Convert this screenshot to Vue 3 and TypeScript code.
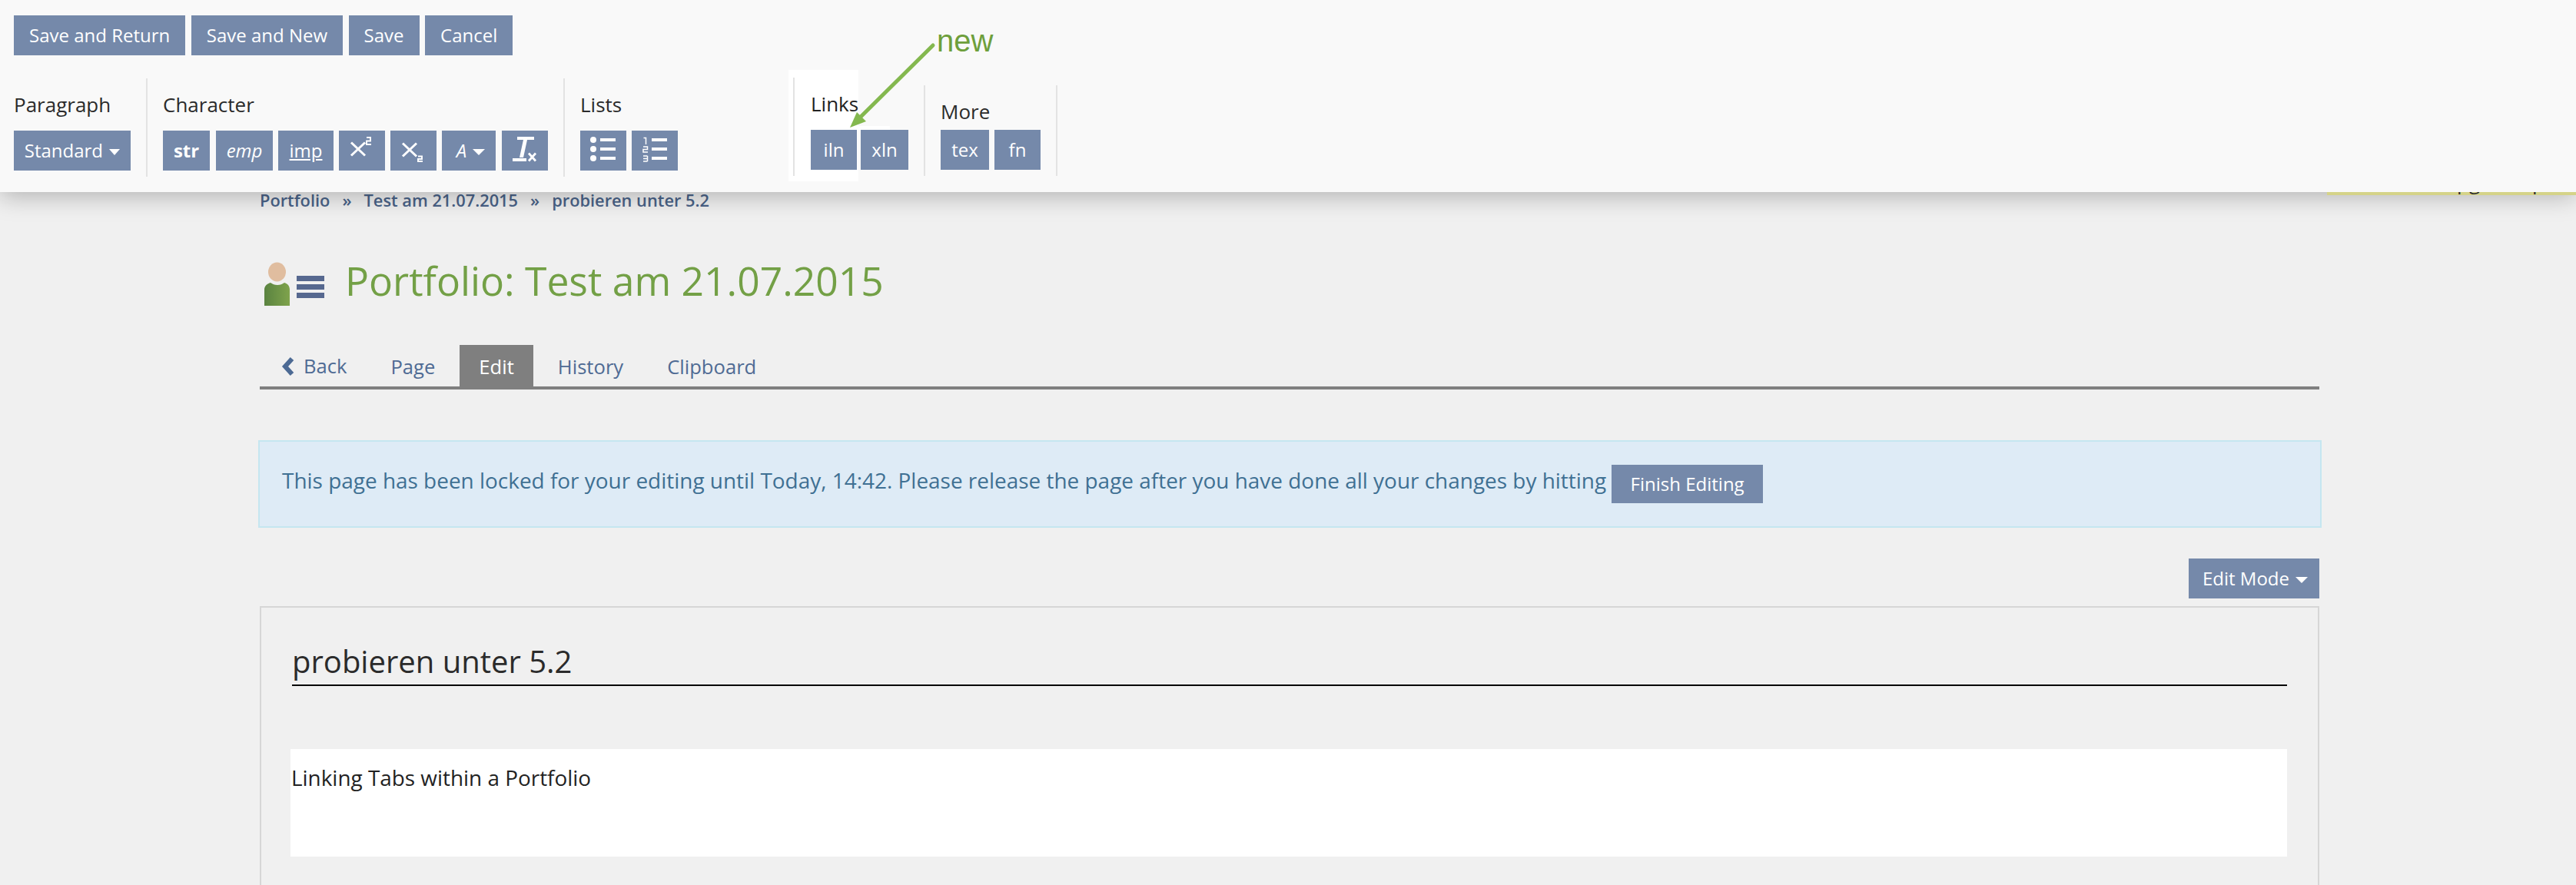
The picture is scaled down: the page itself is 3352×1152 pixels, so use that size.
<script setup lang="ts">
const topActions: string[] = ['Save and Return', 'Save and New', 'Save', 'Cancel']
const tabs: string[] = ['Page', 'Edit', 'History', 'Clipboard']
</script>

<template>
  <div class="page">
    <header class="toolbar">
      <i class="patch patch-a"></i>
      <i class="patch patch-b"></i>
      <div class="actions">
        <button v-for="a in topActions" :key="a" class="btn action">{{ a }}</button>
      </div>
      <div class="groups">
        <section class="group g-par">
          <h4>Paragraph</h4>
          <div class="row"><button class="btn std">Standard <i class="caret"></i></button></div>
        </section>
        <section class="group g-char">
          <h4>Character</h4>
          <div class="row">
            <button class="btn b-str"><strong>str</strong></button>
            <button class="btn b-emp"><em>emp</em></button>
            <button class="btn b-imp"><u>imp</u></button>
            <button class="btn b-ico">
              <svg width="60" height="52" viewBox="0 0 60 52"><path d="M16 15.500l18 17M34 15.500l-18 17" stroke="#fff" stroke-width="3" fill="none"/><path d="M36 9h5v4.500h-5V18h6" stroke="#fff" stroke-width="1.900" fill="none"/></svg>
            </button>
            <button class="btn b-ico">
              <svg width="60" height="52" viewBox="0 0 60 52"><path d="M16 16.500l18 17M34 16.500l-18 17" stroke="#fff" stroke-width="3" fill="none"/><path d="M36 33.500h5V37h-5v3h6" stroke="#fff" stroke-width="1.900" fill="none"/></svg>
            </button>
            <button class="btn b-a"><em>A</em><i class="caret wide"></i></button>
            <button class="btn b-ico b-tx">
              <svg width="60" height="52" viewBox="0 0 60 52" fill="#fff"><path d="M20 8h22v4h-9l-5 23h-5l5-23H20zM14 36h18v4H14z"/><path d="M35 29.500l9 10M44 29.500l-9 10" stroke="#fff" stroke-width="2.800" fill="none"/></svg>
            </button>
          </div>
        </section>
        <section class="group g-list">
          <h4>Lists</h4>
          <div class="row">
            <button class="btn b-ico">
              <svg width="60" height="52" viewBox="0 0 60 52" fill="#fff"><circle cx="17" cy="12" r="4"/><circle cx="17" cy="24" r="4"/><circle cx="17" cy="36" r="4"/><path d="M26 10h20v4H26zM26 22h20v4H26zM26 34h20v4H26z"/></svg>
            </button>
            <button class="btn b-ico">
              <svg width="60" height="52" viewBox="0 0 60 52"><path d="M26 10h20v4H26zM26 22h20v4H26zM26 34h20v4H26z" fill="#fff"/><path d="M15.500 9.500h3V18M15 21h5.500v3.500H15V28h6M15 33h5.500M15 36.500h5.500M15 40h5.500M20.500 33v7" stroke="#fff" stroke-width="1.500" fill="none"/></svg>
            </button>
          </div>
        </section>
        <section class="group g-links">
          <h4>Links</h4>
          <div class="row"><button class="btn b-iln">iln</button><button class="btn b-xln">xln</button></div>
        </section>
        <section class="group g-more">
          <h4>More</h4>
          <div class="row"><button class="btn b-tex">tex</button><button class="btn b-fn">fn</button></div>
        </section>
      </div>
      <span class="new">new</span>
      <svg class="arrow" width="130" height="130" viewBox="0 0 130 130">
        <path d="M114 9L18 104" stroke="#84b84f" stroke-width="5" stroke-linecap="round" fill="none"/>
        <path d="M6 116l9-20 12 12z" fill="#84b84f"/>
      </svg>
    </header>

    <div class="notice-strip"><span class="frag f1">pg</span><span class="frag f2">p</span></div>

    <main class="content">
      <nav class="crumbs"><a>Portfolio</a><span>»</span><a>Test am 21.07.2015</a><span>»</span><a>probieren unter 5.2</a></nav>
      <div class="title">
        <svg class="tico" width="78" height="58" viewBox="0 0 78 58">
          <defs><linearGradient id="bg" x1="0" x2="1" y1="0" y2="0"><stop offset="0" stop-color="#5a8340"/><stop offset="1" stop-color="#7fa34c"/></linearGradient></defs>
          <ellipse cx="16.500" cy="13" rx="11.500" ry="12.500" fill="#e0bd9f"/>
          <path d="M0 57V36c0-5 4-8 8-9 3 2 5 3 9 3s6-1 9-3c4 1 7 4 7 9v21z" fill="url(#bg)"/>
          <path d="M42 18h36v7H42zM42 29h36v7H42zM42 40h36v7H42z" fill="#56688f"/>
        </svg>
        <h1>Portfolio: Test am 21.07.2015</h1>
      </div>
      <div class="tabs">
        <a class="tab back"><svg width="18" height="24" viewBox="0 0 18 24"><path d="M14 2L5 12l9 10" stroke="#4c6a94" stroke-width="6" fill="none"/></svg>Back</a>
        <a v-for="t in tabs" :key="t" class="tab" :class="{ active: t === 'Edit' }">{{ t }}</a>
      </div>
      <div class="alert">
        <span>This page has been locked for your editing until Today, 14:42. Please release the page after you have done all your changes by hitting</span>
        <button class="btn finish">Finish Editing</button>
      </div>
      <div class="modebar"><button class="btn mode">Edit Mode<i class="caret wide"></i></button></div>
      <section class="panel">
        <h2>probieren unter 5.2</h2>
        <div class="para">Linking Tabs within a Portfolio</div>
      </section>
    </main>
  </div>
</template>

<style>
html, body { margin: 0; background: #f0f0f0; overflow: hidden; }
</style>

<style scoped>
.page { position: relative; width: 3352px; height: 1152px; overflow: hidden; background: #f0f0f0; font-family: "Open Sans", "Noto Sans", sans-serif; }
.toolbar { position: relative; z-index: 3; height: 250px; box-sizing: border-box; background: #f9f9f9; padding-top: 20px; box-shadow: 0 5px 30px rgba(0,0,0,.27); }
.patch { position: absolute; background: #fff; display: block; }
.patch-a { left: 1026px; top: 91px; width: 91px; height: 145px; }
.patch-b { left: 1117px; top: 164px; width: 41px; height: 5px; }
.actions { display: flex; gap: 7.5px; margin-left: 18px; }
.btn { border: 0; margin: 0; padding: 0; height: 52px; background: #7589aa; color: #fff; font: 24px/52px "Open Sans", sans-serif; display: inline-flex; align-items: center; justify-content: center; white-space: pre; }
.action { padding: 0 20px; }
.caret { display: inline-block; width: 0; height: 0; border-left: 7px solid transparent; border-right: 7px solid transparent; border-top: 8px solid #fff; margin-left: 2px; margin-top: 4px; }
.caret.wide { border-left-width: 8px; border-right-width: 8px; margin-left: 8px; }
.groups { position: relative; display: flex; align-items: flex-start; margin-top: 30px; }
.group { box-sizing: border-box; height: 128px; }
.group h4 { box-sizing: border-box; margin: 0; font: 400 26px/36px "Open Sans", sans-serif; color: #2b2b2b; padding-top: 16px; height: 68px; }
.row { display: flex; gap: 7px; }
.g-par { width: 192px; padding-left: 18px; border-right: 2px solid #e3e3e3; }
.g-char { width: 543px; padding-left: 20px; border-right: 2px solid #e3e3e3; }
.g-list { width: 297px; padding-left: 20px; }
.g-links { width: 170px; padding-left: 21px; margin-top: -1px; border-left: 2px solid #e3e3e3; }
.g-links h4 { color: #222; }
.g-links .row { gap: 5px; }
.g-more { width: 174px; height: 118px; padding-left: 20px; margin-top: 9px; border-left: 2px solid #e3e3e3; border-right: 2px solid #e3e3e3; }
.g-more h4 { height: 58px; }
.std { width: 152px; }
.b-str { width: 61px; }
.b-emp { width: 74px; margin-left: 1px; }
.b-imp { width: 72px; }
.b-ico { width: 60px; }
.b-tx { margin-left: 1px; }
.b-a { width: 70px; padding-left: 5px; box-sizing: border-box; }
.b-iln { width: 60px; }
.b-xln { width: 62px; }
.b-tex { width: 63px; }
.b-fn { width: 60px; }
.new { position: absolute; left: 1219px; top: 30px; font: 40px/46px "Liberation Sans", Arial, sans-serif; color: #6e9f3c; }
.arrow { position: absolute; left: 1100px; top: 50px; }

.notice-strip { position: absolute; z-index: 4; left: 3028px; top: 250px; width: 324px; height: 4px; background: #d5d388; overflow: hidden; }
.frag { position: absolute; top: -26px; font: 26px/26px "Open Sans", sans-serif; color: #2b2b2b; white-space: nowrap; }
.f1 { left: 169px; }
.f2 { left: 267px; }

.content { margin: 0 334px 0 338px; }
.crumbs { display: flex; gap: 16px; margin-top: -4px; font: 600 21.8px/30px "Open Sans", sans-serif; color: #4a6388; }
.title { display: flex; align-items: flex-start; margin-top: 65px; height: 58px; }
.tico { margin-left: 6px; flex: none; }
h1 { margin: -5px 0 0 27px; font: 400 51.6px/58px "Open Sans", sans-serif; color: #73a046; white-space: nowrap; }
.tabs { display: flex; gap: 7px; margin-top: 50px; padding-left: 28px; border-bottom: 4px solid #7f7f7f; }
.tab { box-sizing: border-box; height: 54px; padding: 2px 25px 0; font-size: 25.6px; line-height: 54px; color: #4f6b94; }
.tab.back { display: flex; align-items: center; gap: 11px; padding-left: 0; }
.tab.active { background: #7f7f7f; color: #fff; }
.alert { box-sizing: border-box; display: flex; align-items: flex-start; gap: 7px; height: 114px; margin: 66px -3px 0 -2px; padding: 30px 0 0 29px; border: 2px solid #c5e6f0; background: #deebf6; color: #3f7093; font-size: 27.94px; line-height: 40px; white-space: nowrap; }
.finish { width: 197px; height: 50px; }
.modebar { display: flex; justify-content: flex-end; margin-top: 40px; }
.mode { width: 170px; height: 52px; padding-left: 3px; box-sizing: border-box; }
.panel { box-sizing: border-box; height: 500px; margin-top: 10px; padding: 43px 40px 0 38px; border: 2px solid #d6d6d6; }
h2 { margin: 0 0 0 2px; padding-bottom: 3px; font: 400 40px/54px "Open Sans", sans-serif; color: #2b2b2b; border-bottom: 2px solid #000; }
.para { box-sizing: border-box; height: 140px; margin-top: 82px; padding: 17px 0 0 1px; background: #fff; color: #222; font-size: 27.9px; line-height: 40px; }
</style>
